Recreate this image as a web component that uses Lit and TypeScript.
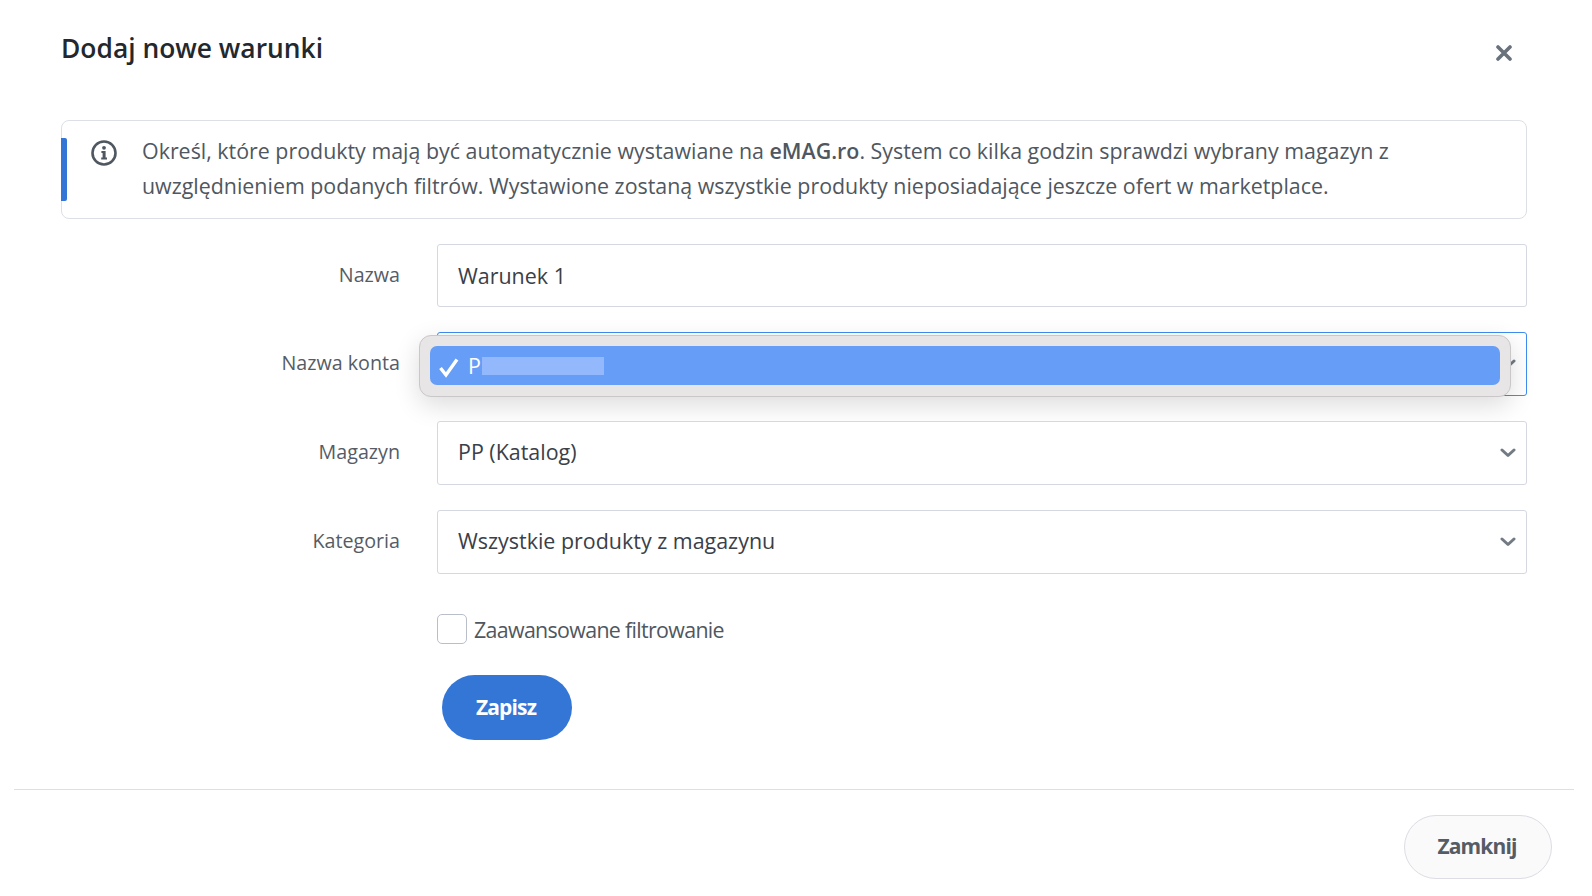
import { LitElement, html, css } from "lit";
import { customElement } from "lit/decorators.js";

const chevron = html`<svg class="chev" width="16" height="10" viewBox="0 0 16 10"><path d="M2 2 L8 7.5 L14 2" fill="none" stroke="#727a84" stroke-width="3" stroke-linecap="round" stroke-linejoin="round"/></svg>`;

@customElement("app-root")
export class AppRoot extends LitElement {
  static styles = css`
    :host { display: block; width: 1592px; height: 896px; overflow: hidden; background: #fff; box-sizing: border-box; font-family: "Open Sans", sans-serif; color: #4f5760; }
    * { box-sizing: border-box; }
    .head { display: flex; justify-content: space-between; padding: 30px 80px 0 61px; height: 120px; }
    h1 { margin: 0; font-size: 26.4px; line-height: 36px; font-weight: 600; color: #23282e; }
    .close { margin-top: 15px; display: block; }
    .body { padding: 0 65px 0 61px; }
    .alert { position: relative; height: 99px; border: 1px solid #dcdfe6; border-radius: 8px; display: flex; padding: 12px 20px 0 29px; font-size: 21.4px; line-height: 35px; }
    .alert::before { content: ""; position: absolute; left: -1px; top: 17px; width: 6px; height: 63px; background: #3476d6; border-radius: 0 2px 2px 0; }
    .alert svg { flex: none; margin: 6.5px 25px 0 0; }
    .alert b { font-weight: 600; }
    .form { display: grid; grid-template-columns: 376px 1fr; column-gap: 0; row-gap: 25px; margin-top: 25px; }
    label { font-size: 19.7px; text-align: right; padding-right: 37px; align-self: center; color: #555c65; margin-top: -3px; }
    .field { position: relative; height: 64px; border: 1px solid #d5d8e0; border-radius: 3px; display: flex; align-items: center; justify-content: space-between; padding: 0 10px 0 20px; font-size: 21.45px; color: #3a4048; background: #fff; }
    .first { height: 63px; }
    .select { padding-bottom: 3px; }
    .select svg { margin-top: 2px; }
    .focus { border-color: #3f8cf0; }
    .popup { position: absolute; left: -19px; top: 2px; width: 1092px; height: 62px; background: #e8e5e6; border: 1px solid #c9c7c8; border-radius: 12px; padding: 10px; box-shadow: 0 8px 26px rgba(0,0,0,.14); }
    .opt { height: 39px; background: #669df6; border-radius: 7px; display: flex; align-items: center; color: #fff; padding-left: 8px; font-size: 21.4px; gap: 8px; }
    .mask { width: 122px; height: 18px; background: #93b8fb; margin-left: -7px; }
    .check { grid-column: 2; display: flex; align-items: center; gap: 7px; font-size: 21.4px; letter-spacing: -0.67px; margin-top: 15px; color: #4f5760; }
    .box { width: 30px; height: 30px; border: 1px solid #b9bec8; border-radius: 5px; }
    .save { grid-column: 2; margin: 6px 0 0 5px; }
    button { font-family: inherit; height: 64px; border-radius: 33px; font-size: 21px; font-weight: 700; letter-spacing: -0.85px; padding: 0 2px 2px 0; }
    .save button { width: 130px; height: 65px; background: #3476d6; color: #fff; border: none; }
    hr { margin: 49px 18px 0 14px; border: none; border-top: 1px solid #dedee6; }
    .foot { display: flex; justify-content: flex-end; padding: 25px 40px 0 0; }
    .foot button { width: 148px; background: #fafafb; border: 1px solid #dcdde5; color: #555c65; }
  `;

  render() {
    return html`
      <div class="head">
        <h1>Dodaj nowe warunki</h1>
        <svg class="close" width="16" height="16" viewBox="0 0 16 16"><path d="M2 2 L14 14 M14 2 L2 14" stroke="#69717b" stroke-width="3.6" stroke-linecap="round"/></svg>
      </div>
      <div class="body">
        <div class="alert">
          <svg width="26" height="26" viewBox="0 0 26 26">
            <circle cx="13" cy="13" r="11.5" fill="none" stroke="#4f5760" stroke-width="2.6"/>
            <circle cx="13" cy="7.8" r="1.9" fill="#4f5760"/>
            <path d="M10.4 11 H14.6 V17.6 H16 V19.6 H10.2 V17.6 H11.6 V13 H10.4 Z" fill="#4f5760"/>
          </svg>
          <div>Określ, które produkty mają być automatycznie wystawiane na <b>eMAG.ro</b>. System co kilka godzin sprawdzi wybrany magazyn z uwzględnieniem podanych filtrów. Wystawione zostaną wszystkie produkty nieposiadające jeszcze ofert w marketplace.</div>
        </div>
        <div class="form">
          <label>Nazwa</label>
          <div class="field first">Warunek 1</div>
          <label>Nazwa konta</label>
          <div class="field focus select">
            <span></span>${chevron}
            <div class="popup">
              <div class="opt">
                <svg width="22" height="22" viewBox="0 0 22 22"><path d="M2.5 12 L8 19 L19 3.5" fill="none" stroke="#fff" stroke-width="3.4"/></svg>
                <span>P</span><span class="mask"></span>
              </div>
            </div>
          </div>
          <label>Magazyn</label>
          <div class="field select">PP (Katalog)${chevron}</div>
          <label>Kategoria</label>
          <div class="field select">Wszystkie produkty z magazynu${chevron}</div>
          <div class="check"><span class="box"></span>Zaawansowane filtrowanie</div>
          <div class="save"><button>Zapisz</button></div>
        </div>
      </div>
      <hr />
      <div class="foot"><button>Zamknij</button></div>
    `;
  }
}
